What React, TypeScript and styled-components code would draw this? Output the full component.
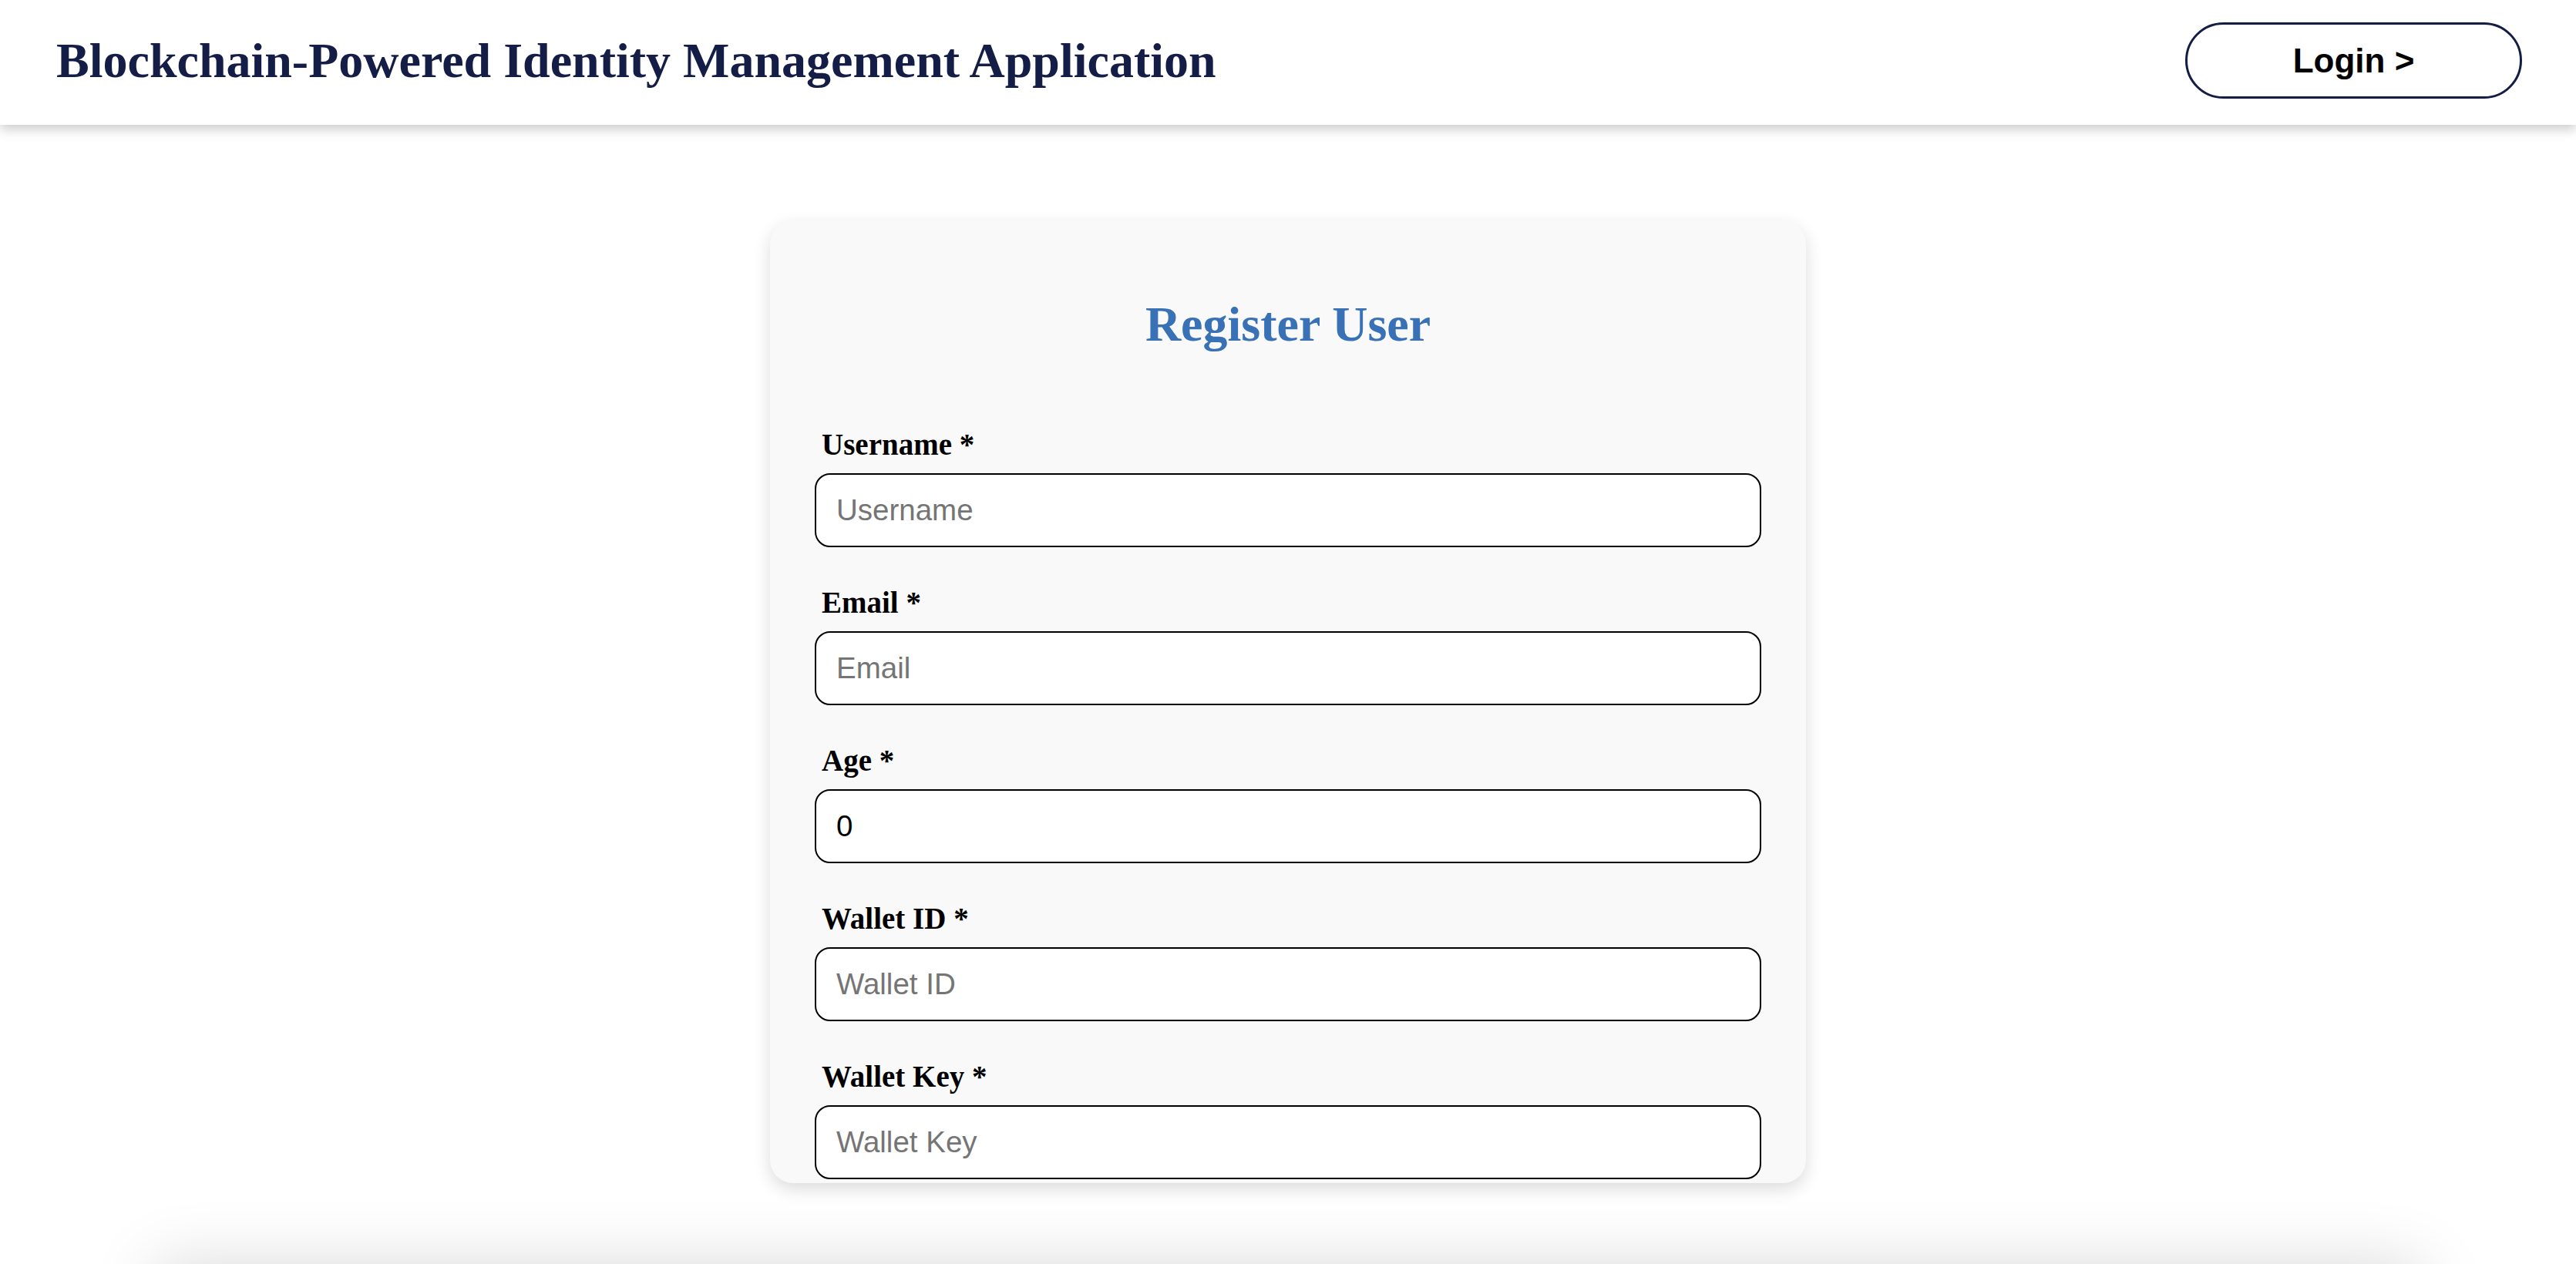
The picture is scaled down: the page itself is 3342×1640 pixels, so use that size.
import React from "react";
import styled, { createGlobalStyle } from "styled-components";

const GlobalStyle = createGlobalStyle`
  html, body {
    margin: 0;
    padding: 0;
    background: #ffffff;
  }
  * { box-sizing: border-box; }
  body {
    font-family: "Liberation Serif", "Times New Roman", serif;
  }
`;

const Page = styled.div`
  display: flex;
  flex-direction: column;
  align-items: center;
  min-height: 100vh;
`;

const Header = styled.header`
  width: 100%;
  height: 162px;
  display: flex;
  align-items: center;
  justify-content: space-between;
  padding: 0 70px 5px 73px;
  background: #ffffff;
  box-shadow: 0 6px 14px rgba(0, 0, 0, 0.2);
  position: relative;
  z-index: 2;
`;

const Title = styled.h1`
  margin: 0;
  font-family: "Liberation Serif", "Times New Roman", serif;
  font-weight: 700;
  font-size: 64px;
  line-height: 74px;
  color: #141d45;
`;

const LoginButton = styled.button`
  width: 437px;
  height: 99px;
  border: 3px solid #141d45;
  border-radius: 50px;
  background: #ffffff;
  color: #000000;
  font-family: "Liberation Sans", Arial, sans-serif;
  font-weight: 700;
  font-size: 44px;
  cursor: pointer;
`;

const Main = styled.main`
  width: 100%;
  display: flex;
  flex-direction: column;
  align-items: center;
  padding-top: 124px;
`;

const Card = styled.section`
  width: 1344px;
  height: 1249px;
  overflow: hidden;
  background: #f9f9f9;
  border-radius: 30px;
  padding: 98px 58px 0;
  box-shadow: 0 8px 22px rgba(0, 0, 0, 0.14);
`;

const CardTitle = styled.h2`
  margin: 0 0 96px;
  text-align: center;
  font-family: "Liberation Serif", "Times New Roman", serif;
  font-weight: 700;
  font-size: 64px;
  line-height: 74px;
  color: #3871b5;
`;

const Form = styled.form`
  display: flex;
  flex-direction: column;
  gap: 49px;
`;

const Field = styled.div`
  display: flex;
  flex-direction: column;
`;

const Label = styled.label`
  margin: 0 0 15px 9px;
  font-family: "Liberation Serif", "Times New Roman", serif;
  font-weight: 700;
  font-size: 39px;
  line-height: 45px;
  color: #000000;
`;

const Input = styled.input`
  width: 100%;
  height: 96px;
  border: 2px solid #000000;
  border-radius: 20px;
  background: #ffffff;
  padding: 0 26px;
  font-family: "Liberation Sans", Arial, sans-serif;
  font-size: 38.5px;
  color: #000000;
  outline: none;
  &::placeholder {
    color: #757575;
  }
`;

const LowerPanel = styled.section`
  width: 88%;
  min-height: 360px;
  margin-top: 105px;
  background: #ffffff;
  box-shadow: 0 0 80px rgba(0, 0, 0, 0.15);
`;

const fields = [
  { id: "username", label: "Username *", placeholder: "Username", type: "text" },
  { id: "email", label: "Email *", placeholder: "Email", type: "email" },
  { id: "age", label: "Age *", placeholder: "Age", type: "number", value: "0" },
  { id: "walletId", label: "Wallet ID *", placeholder: "Wallet ID", type: "text" },
  { id: "walletKey", label: "Wallet Key *", placeholder: "Wallet Key", type: "text" },
];

export default function App() {
  return (
    <>
      <GlobalStyle />
      <Page>
        <Header>
          <Title>Blockchain-Powered Identity Management Application</Title>
          <LoginButton type="button">Login &gt;</LoginButton>
        </Header>
        <Main>
          <Card>
            <CardTitle>Register User</CardTitle>
            <Form onSubmit={(e) => e.preventDefault()}>
              {fields.map((f) => (
                <Field key={f.id}>
                  <Label htmlFor={f.id}>{f.label}</Label>
                  <Input
                    id={f.id}
                    type={f.type}
                    placeholder={f.placeholder}
                    defaultValue={f.value}
                  />
                </Field>
              ))}
            </Form>
          </Card>
          <LowerPanel />
        </Main>
      </Page>
    </>
  );
}
